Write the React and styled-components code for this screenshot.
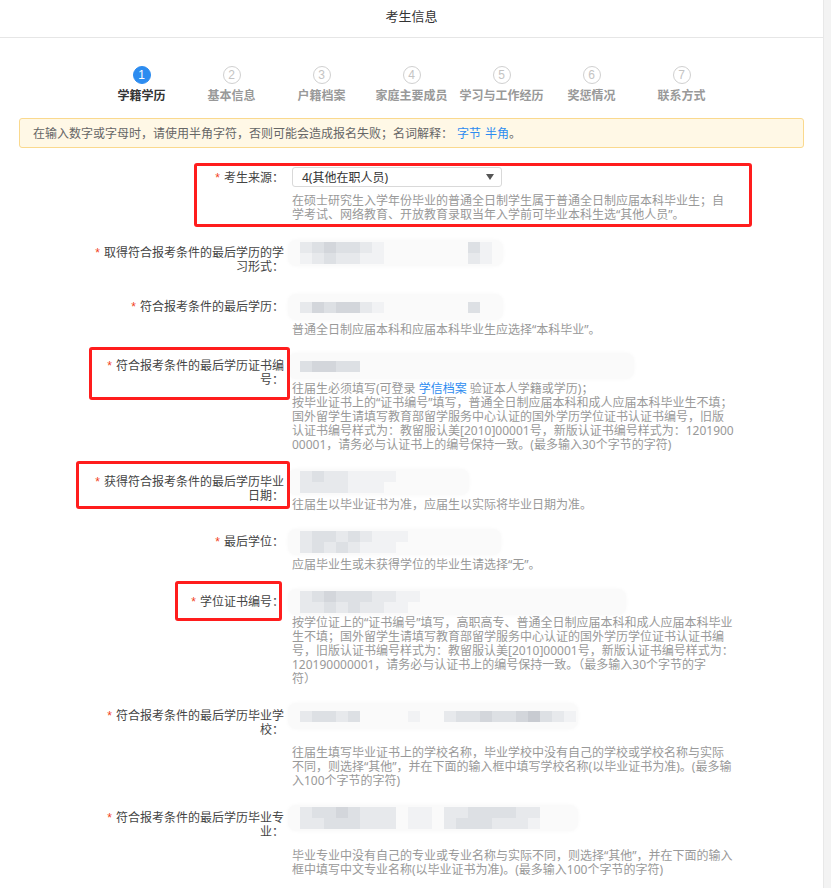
import React from "react";
import styled, { createGlobalStyle, css } from "styled-components";

const Colors = {
  text: "#333",
  label: "#444",
  gray: "#999",
  blue: "#2d8cf0",
  red: "#ff1d1d",
  star: "#f2411b",
  line: "#e6e6e6",
};

const GlobalStyle = createGlobalStyle`
  html, body {
    margin: 0;
    padding: 0;
    background: #fff;
    overflow: hidden;
  }
  body {
    font-family: "Microsoft YaHei", "Noto Sans", "Noto Sans CJK SC", sans-serif;
    font-size: 12px;
    color: ${Colors.text};
  }
  * { box-sizing: border-box; }
`;

const markCss = css`
  &::after {
    content: "";
    position: absolute;
    inset: ${(p) => p.$mark};
    border: 3px solid ${Colors.red};
    border-radius: 3px;
    pointer-events: none;
  }
`;

const Page = styled.div`
    display: flex;
    height: 888px;
  `,
  Main = styled.div`
    flex: 1;
    min-width: 0;
  `,
  ScrollTrack = styled.div`
    width: 8px;
    background: #f3f3f3;
    border-left: 1px solid #e8e8e8;
  `,
  TitleBar = styled.div`
    height: 38px;
    border-bottom: 1px solid ${Colors.line};
    text-align: center;
    font-size: 13px;
    line-height: 33px;
    color: ${Colors.text};
  `,
  Content = styled.div`
    width: 785px;
    margin: 0 auto;
  `,
  Steps = styled.div`
    display: flex;
    justify-content: center;
    padding-top: 28px;
  `,
  Step = styled.div`
    width: 90px;
    display: flex;
    flex-direction: column;
    align-items: center;
  `,
  Circle = styled.span`
    width: 18px;
    height: 18px;
    border-radius: 50%;
    border: 1px solid ${(p) => (p.$active ? Colors.blue : "#d0d0d0")};
    background: ${(p) => (p.$active ? Colors.blue : "#fff")};
    color: ${(p) => (p.$active ? "#fff" : "#c4c4c4")};
    font-family: "Liberation Sans", sans-serif;
    font-size: 12px;
    line-height: 16px;
    text-align: center;
  `,
  StepName = styled.span`
    margin-top: 5px;
    font-size: 12px;
    line-height: 14px;
    font-weight: bold;
    color: ${(p) => (p.$active ? Colors.text : Colors.gray)};
    white-space: nowrap;
  `,
  Notice = styled.div`
    margin-top: 15px;
    height: 30px;
    border: 1px solid #fad98e;
    background: #fff8e6;
    border-radius: 3px;
    padding: 0 13px;
    display: flex;
    align-items: center;
    color: #666;
  `,
  Link = styled.a`
    color: ${Colors.blue};
    text-decoration: none;
    margin: 0 ${(p) => p.$space || 0}px;
  `,
  Form = styled.div`
    margin-top: 19px;
    padding-left: 73px;
  `,
  Row = styled.div`
    display: flex;
    align-items: flex-start;
    position: relative;
    margin-bottom: ${(p) => p.$after}px;
    ${(p) => p.$mark && markCss}
  `,
  Label = styled.div`
    position: relative;
    flex: none;
    width: 192px;
    padding-top: ${(p) => p.$top}px;
    text-align: right;
    line-height: 13px;
    color: ${Colors.label};
    ${(p) => p.$mark && markCss}
  `,
  Star = styled.span`
    color: ${Colors.star};
    margin-right: 4px;
    font-family: "Liberation Sans", sans-serif;
  `,
  Field = styled.div`
    margin-left: 8px;
    width: 442px;
  `,
  Select = styled.div`
    width: 210px;
    height: 20px;
    border: 1px solid #d9d9d9;
    border-radius: 3px;
    display: flex;
    align-items: center;
    justify-content: space-between;
    padding: 0 7px 0 9px;
    color: ${Colors.text};
  `,
  Caret = styled.span`
    width: 0;
    height: 0;
    border-left: 4px solid transparent;
    border-right: 4px solid transparent;
    border-top: 6px solid #555;
  `,
  Blur = styled.div`
    margin-left: -4px;
    width: ${(p) => p.$w}px;
    height: 26px;
    border-radius: 8px;
    background: #fafafa;
    box-shadow: 0 0 4px rgba(0, 0, 0, 0.03);
    display: flex;
    flex-direction: column;
    justify-content: center;
    padding-left: 12px;
  `,
  MosaicRow = styled.div`
    display: flex;
  `,
  Cell = styled.span`
    width: 12px;
    height: 11px;
    background: ${(p) => shades[p.$s] || "transparent"};
  `,
  Note = styled.div`
    margin-top: ${(p) => p.$gap}px;
    line-height: 14px;
    color: ${Colors.gray};
    white-space: nowrap;
  `,
  NoteLine = styled.div``;

const shades = {
  1: "#f1f2f4",
  2: "#e7e9ec",
  3: "#dde0e4",
  4: "#d3d6db",
  5: "#c8cbd1",
};

const steps = [
  "学籍学历",
  "基本信息",
  "户籍档案",
  "家庭主要成员",
  "学习与工作经历",
  "奖惩情况",
  "联系方式",
];

const rows = [
  {
    label: "考生来源：",
    select: "4(其他在职人员)",
    rowMark: "-4px 52px -5px 102px",
    gap: 7,
    after: 18,
    note: [
      "在硕士研究生入学年份毕业的普通全日制学生属于普通全日制应届本科毕业生；自",
      "学考试、网络教育、开放教育录取当年入学前可毕业本科生选“其他人员”。",
    ],
  },
  {
    label: "取得符合报考条件的最后学历的学习形式：",
    width: 215,
    blocks: ["2343321000000031", "1232211000000021"],
    after: 21,
  },
  {
    label: "符合报考条件的最后学历：",
    width: 215,
    blocks: ["2434421000000030"],
    after: 16,
    note: ["普通全日制应届本科和应届本科毕业生应选择“本科毕业”。"],
  },
  {
    label: "符合报考条件的最后学历证书编号：",
    width: 346,
    blocks: ["3443300"],
    labelMark: "-6px -6px -14px -3px",
    note: [
      <>
        往届生必须填写(可登录 <Link>学信档案</Link> 验证本人学籍或学历)；
      </>,
      "按毕业证书上的“证书编号”填写，普通全日制应届本科和成人应届本科毕业生不填；",
      "国外留学生请填写教育部留学服务中心认证的国外学历学位证书认证书编号，旧版",
      "认证书编号样式为：教留服认美[2010]00001号，新版认证书编号样式为：1201900",
      "00001，请务必与认证书上的编号保持一致。(最多输入30个字节的字符)",
    ],
  },
  {
    label: "获得符合报考条件的最后学历毕业日期：",
    width: 181,
    blocks: ["2322111100", "2222111000"],
    labelMark: "-8px -6px -7px -16px",
    note: ["往届生以毕业证书为准，应届生以实际将毕业日期为准。"],
  },
  {
    label: "最后学位：",
    width: 213,
    blocks: ["2332321110000", "2323211100000"],
    note: ["应届毕业生或未获得学位的毕业生请选择“无”。"],
  },
  {
    label: "学位证书编号：",
    width: 338,
    blocks: ["2343332211", "2232322110"],
    labelMark: "-8px 2px -12px 83px",
    gap: 1,
    note: [
      "按学位证上的“证书编号”填写，高职高专、普通全日制应届本科和成人应届本科毕业",
      "生不填；国外留学生请填写教育部留学服务中心认证的国外学历学位证书认证书编",
      "号，旧版认证书编号样式为：教留服认美[2010]00001号，新版认证书编号样式为：",
      "120190000001，请务必与认证书上的编号保持一致。（最多输入30个字节的字",
      "符）",
    ],
  },
  {
    label: "符合报考条件的最后学历毕业学校：",
    width: 290,
    blocks: ["23323000010023343345321"],
    gap: 17,
    note: [
      "往届生填写毕业证书上的学校名称，毕业学校中没有自己的学校或学校名称与实际",
      "不同，则选择“其他”，并在下面的输入框中填写学校名称(以毕业证书为准)。(最多输",
      "入100个字节的字符)",
    ],
  },
  {
    label: "符合报考条件的最后学历毕业专业：",
    width: 290,
    blocks: ["23343222011022333322", "22333222011023332221"],
    gap: 18,
    after: 0,
    note: [
      "毕业专业中没有自己的专业或专业名称与实际不同，则选择“其他”，并在下面的输入",
      "框中填写中文专业名称(以毕业证书为准)。(最多输入100个字节的字符)",
    ],
  },
];

const Mosaic = ({ width, blocks }) => (
  <Blur $w={width}>
    {blocks.map((line, i) => (
      <MosaicRow key={i}>
        {line.split("").map((s, j) => (
          <Cell key={j} $s={s} />
        ))}
      </MosaicRow>
    ))}
  </Blur>
);

const FormRow = ({ row }) => (
  <Row $after={row.after ?? 17} $mark={row.rowMark}>
    <Label $top={row.select ? 4 : 6} $mark={row.labelMark}>
      <Star>*</Star>
      {row.label}
    </Label>
    <Field>
      {row.select ? (
        <Select>
          {row.select}
          <Caret />
        </Select>
      ) : (
        <Mosaic width={row.width} blocks={row.blocks} />
      )}
      {row.note && (
        <Note $gap={row.gap ?? 3}>
          {row.note.map((line, i) => (
            <NoteLine key={i}>{line}</NoteLine>
          ))}
        </Note>
      )}
    </Field>
  </Row>
);

export default function App() {
  return (
    <Page>
      <GlobalStyle />
      <Main>
        <TitleBar>考生信息</TitleBar>
        <Content>
          <Steps>
            {steps.map((name, index) => (
              <Step key={name}>
                <Circle $active={index === 0}>{index + 1}</Circle>
                <StepName $active={index === 0}>{name}</StepName>
              </Step>
            ))}
          </Steps>
          <Notice>
            在输入数字或字母时，请使用半角字符，否则可能会造成报名失败；名词解释：
            <Link $space={4}>字节</Link>
            <Link>半角</Link>。
          </Notice>
          <Form>
            {rows.map((row) => (
              <FormRow key={row.label} row={row} />
            ))}
          </Form>
        </Content>
      </Main>
      <ScrollTrack />
    </Page>
  );
}
